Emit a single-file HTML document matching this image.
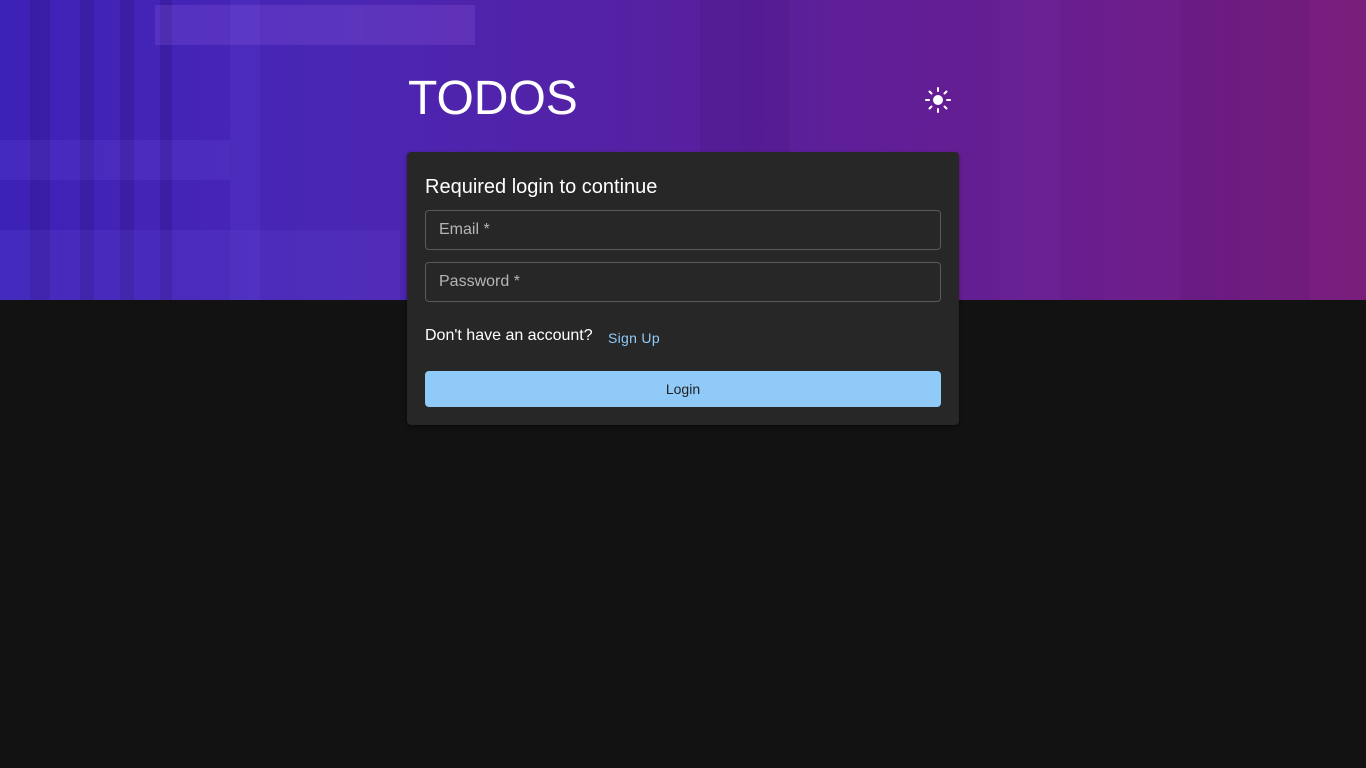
<!DOCTYPE html>
<html><head><meta charset="utf-8"><style>
*{box-sizing:border-box;margin:0;padding:0}
body{width:1366px;height:768px;background:#121212;font-family:"Liberation Sans",Arial,sans-serif;position:relative;overflow:hidden}
.hero{position:absolute;left:0;top:0;width:1366px;height:300px;background:linear-gradient(90deg,#3d22b8 0%,#4a26b4 25%,#5a1f9c 55%,#6a1e8e 80%,#7a1e7c 100%);overflow:hidden}
.band{position:absolute;top:0;height:300px;background:rgba(20,0,60,0.14)}
.light{position:absolute;background:rgba(200,140,255,0.14)}
h1{position:absolute;left:408px;top:73px;color:#fff;font-weight:400;font-size:48px;line-height:52px}
.sun{position:absolute;left:924px;top:86px}
.card{position:absolute;left:407px;top:152px;width:552px;height:273px;background:#272727;border-radius:4px;box-shadow:0 2px 4px rgba(0,0,0,.4)}
.t{position:absolute;left:18px;top:24px;color:#fff;font-size:20px}
.f{position:absolute;left:18px;width:516px;height:40px;border:1px solid #5a5a5a;border-radius:4px;color:#b5b5b5;font-size:16px;padding:10px 13px}
.q{position:absolute;left:18px;top:175px;color:#fff;font-size:16px}
.s{position:absolute;left:201px;top:178px;color:#90caf9;font-size:14px;letter-spacing:.3px}
.b{position:absolute;left:18px;top:219px;width:516px;height:36px;background:#90caf9;border-radius:4px;color:#222;font-size:14px;text-align:center;line-height:36px}
</style></head><body>
<div class="hero">
<div class="band" style="left:30px;width:20px"></div>
<div class="band" style="left:80px;width:14px"></div>
<div class="band" style="left:120px;width:14px"></div>
<div class="band" style="left:160px;width:12px"></div>
<div class="band" style="left:230px;width:30px;background:rgba(120,100,255,.1)"></div>
<div class="band" style="left:700px;width:90px;background:rgba(20,0,60,.08)"></div>
<div class="band" style="left:1000px;width:60px;background:rgba(140,80,200,.07)"></div>
<div class="band" style="left:1180px;width:130px;background:rgba(20,0,60,.06)"></div>
<div class="light" style="left:155px;top:5px;width:320px;height:40px"></div>
<div class="light" style="left:0;top:140px;width:230px;height:40px;background:rgba(150,120,255,.1)"></div>
<div class="light" style="left:0;top:230px;width:400px;height:70px;background:rgba(110,90,230,.14)"></div>
</div>
<h1>TODOS</h1>
<svg class="sun" width="28" height="28" viewBox="0 0 28 28"><circle cx="14" cy="14" r="5" fill="#fff"/><g stroke="#fff" stroke-width="2" stroke-linecap="round"><line x1="14" y1="2" x2="14" y2="5"/><line x1="14" y1="23" x2="14" y2="26"/><line x1="2" y1="14" x2="5" y2="14"/><line x1="23" y1="14" x2="26" y2="14"/><line x1="5.5" y1="5.5" x2="7.5" y2="7.5"/><line x1="20.5" y1="20.5" x2="22.5" y2="22.5"/><line x1="5.5" y1="22.5" x2="7.5" y2="20.5"/><line x1="20.5" y1="7.5" x2="22.5" y2="5.5"/></g></svg>
<div class="card">
<div class="t">Required login to continue</div>
<div class="f" style="top:58px">Email *</div>
<div class="f" style="top:110px">Password *</div>
<div class="q">Don't have an account?</div>
<div class="s">Sign Up</div>
<div class="b">Login</div>
</div>
</body></html>
